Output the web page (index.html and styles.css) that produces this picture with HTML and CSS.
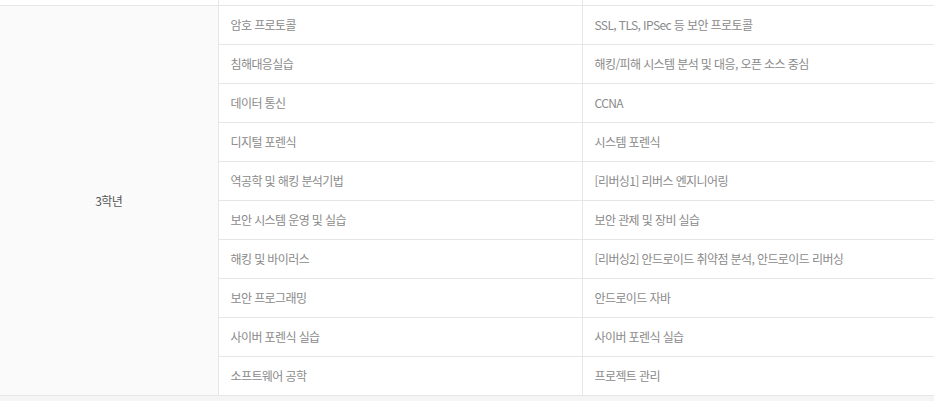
FILE: index.html
```html
<!DOCTYPE html>
<html lang="ko">
<head>
    <meta charset="UTF-8">
    <meta name="viewport" content="width=device-width, initial-scale=1.0">
    <title>교육과정</title>
    <link rel="stylesheet" href="styles.css">
</head>
<body>

<div class="wrap">
    <table class="curriculum">
        <colgroup>
            <col class="col-grade">
            <col class="col-subject">
            <col class="col-content">
        </colgroup>
        <tbody>
            <!-- 이전 학년의 마지막 줄 (잘림) -->
            <tr class="cut">
                <td class="blank"></td>
                <td></td>
                <td></td>
            </tr>
            <tr>
                <th rowspan="10" class="grade">3학년</th>
                <td>암호 프로토콜</td>
                <td>SSL, TLS, IPSec 등 보안 프로토콜</td>
            </tr>
            <tr>
                <td>침해대응실습</td>
                <td>해킹/피해 시스템 분석 및 대응, 오픈 소스 중심</td>
            </tr>
            <tr>
                <td>데이터 통신</td>
                <td>CCNA</td>
            </tr>
            <tr>
                <td>디지털 포렌식</td>
                <td>시스템 포렌식</td>
            </tr>
            <tr>
                <td>역공학 및 해킹 분석기법</td>
                <td>[리버싱1] 리버스 엔지니어링</td>
            </tr>
            <tr>
                <td>보안 시스템 운영 및 실습</td>
                <td>보안 관제 및 장비 실습</td>
            </tr>
            <tr>
                <td>해킹 및 바이러스</td>
                <td>[리버싱2] 안드로이드 취약점 분석, 안드로이드 리버싱</td>
            </tr>
            <tr>
                <td>보안 프로그래밍</td>
                <td>안드로이드 자바</td>
            </tr>
            <tr>
                <td>사이버 포렌식 실습</td>
                <td>사이버 포렌식 실습</td>
            </tr>
            <tr>
                <td>소프트웨어 공학</td>
                <td>프로젝트 관리</td>
            </tr>
        </tbody>
    </table>
    <div class="bottom"></div>
</div>

</body>
</html>
```

FILE: styles.css
```css
body {
    margin: 0;
    padding: 0;
    background-color: #fff;
    font-family: "Noto Sans CJK KR", "Noto Sans", sans-serif;
}
.wrap {
    width: 934px;
}
.curriculum {
    width: 934px;
    border-collapse: collapse;
    table-layout: fixed;
}
.col-grade {
    width: 218px;
}
.col-subject {
    width: 364px;
}
.curriculum th,
.curriculum td {
    height: 39px;
    padding: 0 12px;
    border-bottom: 1px solid #e6e6e6;
    border-left: 1px solid #e6e6e6;
    font-size: 12px;
    font-weight: normal;
    color: #8a8a8a;
    text-align: left;
    letter-spacing: -0.6px;
    box-sizing: border-box;
}
.curriculum tr.cut td {
    height: 5px;
    padding: 0;
}
.curriculum td.blank,
.curriculum th.grade {
    border-left: none;
}
.curriculum th.grade {
    background-color: #fafafa;
    color: #555;
    text-align: center;
    border-right: 1px solid #e6e6e6;
}
.bottom {
    height: 5px;
    background-color: #f5f5f5;
}
```
